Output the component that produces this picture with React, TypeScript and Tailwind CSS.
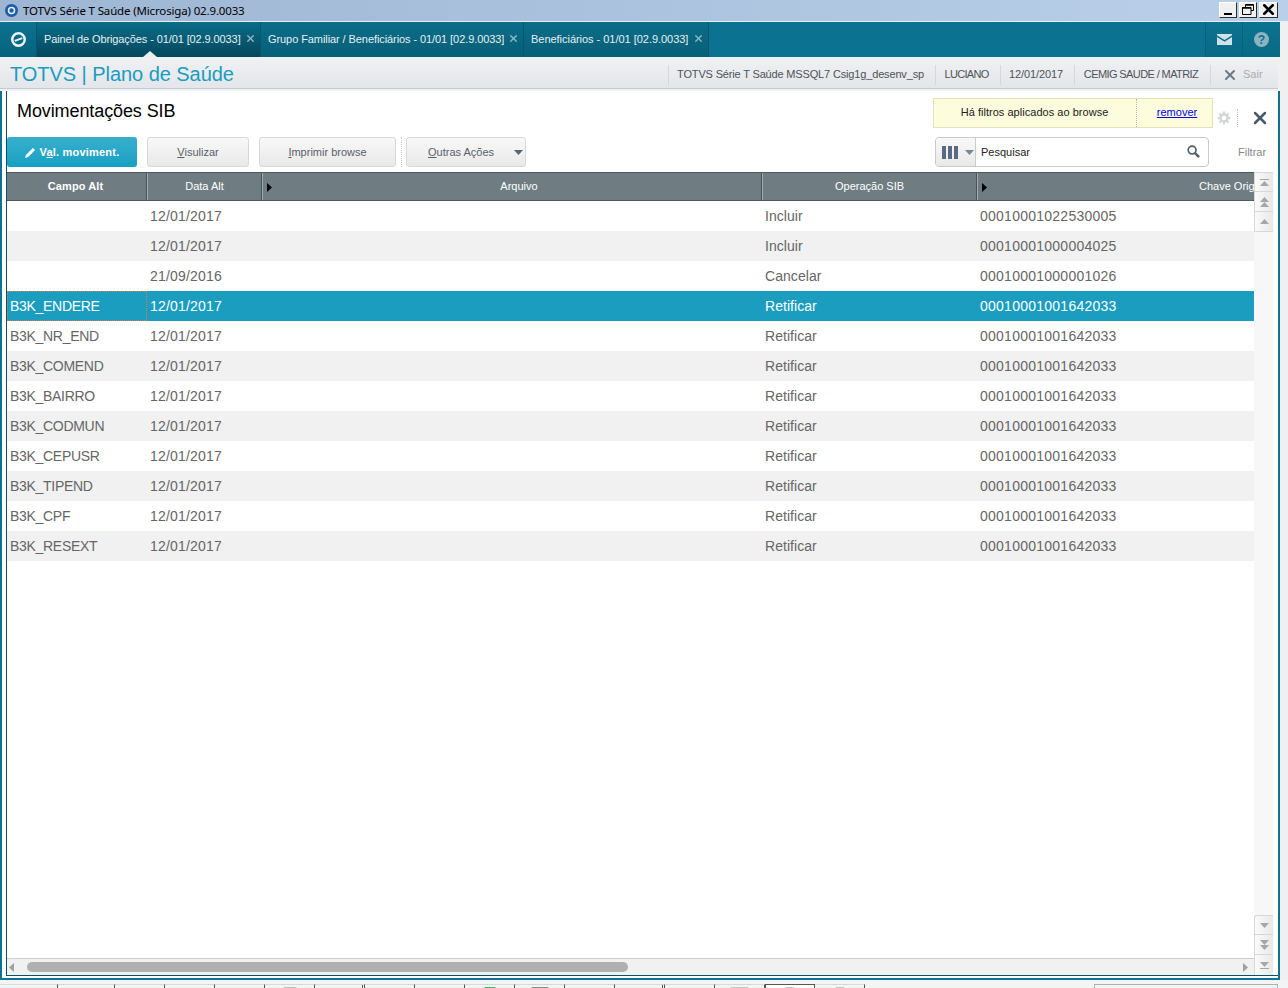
import { X } from 'lucide-react'

const font = "font-['Liberation_Sans',Arial,sans-serif]"

const rows = [
  { campo: '', data: '12/01/2017', op: 'Incluir', chave: '00010001022530005' },
  { campo: '', data: '12/01/2017', op: 'Incluir', chave: '00010001000004025' },
  { campo: '', data: '21/09/2016', op: 'Cancelar', chave: '00010001000001026' },
  { campo: 'B3K_ENDERE', data: '12/01/2017', op: 'Retificar', chave: '00010001001642033', selected: true },
  { campo: 'B3K_NR_END', data: '12/01/2017', op: 'Retificar', chave: '00010001001642033' },
  { campo: 'B3K_COMEND', data: '12/01/2017', op: 'Retificar', chave: '00010001001642033' },
  { campo: 'B3K_BAIRRO', data: '12/01/2017', op: 'Retificar', chave: '00010001001642033' },
  { campo: 'B3K_CODMUN', data: '12/01/2017', op: 'Retificar', chave: '00010001001642033' },
  { campo: 'B3K_CEPUSR', data: '12/01/2017', op: 'Retificar', chave: '00010001001642033' },
  { campo: 'B3K_TIPEND', data: '12/01/2017', op: 'Retificar', chave: '00010001001642033' },
  { campo: 'B3K_CPF', data: '12/01/2017', op: 'Retificar', chave: '00010001001642033' },
  { campo: 'B3K_RESEXT', data: '12/01/2017', op: 'Retificar', chave: '00010001001642033' },
]

const tabs = [
  { label: 'Painel de Obrigações - 01/01 [02.9.0033]', w: 'w-[224px]', track: 'tracking-[-0.1px]', active: true },
  { label: 'Grupo Familiar / Beneficiários - 01/01 [02.9.0033]', w: 'w-[263px]', track: 'tracking-[-0.08px]' },
  { label: 'Beneficiários - 01/01 [02.9.0033]', w: 'w-[185px]', track: 'tracking-[-0.03px]' },
]

const info = [
  { label: 'TOTVS Série T Saúde MSSQL7 Csig1g_desenv_sp', w: 'w-[267px]', track: 'tracking-[-0.16px]' },
  { label: 'LUCIANO', w: 'w-[65px]', track: 'tracking-[-0.7px]' },
  { label: '12/01/2017', w: 'w-[74px]', track: 'tracking-[-0.1px]' },
  { label: 'CEMIG SAUDE / MATRIZ', w: 'w-[136px]', track: 'tracking-[-0.6px]' },
]

// células da barra de janelas, quase toda cortada na parte de baixo da tela
const taskCells = [
  { w: 'w-[58px]' },
  { w: 'w-[57px]' },
  { w: 'w-[50px]' },
  { w: 'w-[50px]' },
  { w: 'w-[50px]' },
  { w: 'w-[50px]', mark: 'w-[14px] bg-[#bdbdbd]' },
  { w: 'w-[50px]', double: true },
  { w: 'w-[50px]' },
  { w: 'w-[50px]' },
  { w: 'w-[50px]', mark: 'w-[12px] bg-[#47b866]' },
  { w: 'w-[50px]', mark: 'w-[18px] bg-[#8a8a8a]' },
  { w: 'w-[50px]' },
  { w: 'w-[50px]', double: true },
  { w: 'w-[50px]' },
  { w: 'w-[50px]', mark: 'w-[19px] bg-[#c4c4c4]' },
  { w: 'w-[50px]', selected: true, mark: 'w-[10px] bg-[#c4c4c4]' },
  { w: 'w-[50px]', mark: 'w-[10px] bg-[#c4c4c4]' },
]

const Tri = ({ dir, className }: { dir: 'up' | 'down' | 'left' | 'right'; className?: string }) => {
  const pts = { up: '0,5 4.5,0 9,5', down: '0,0 9,0 4.5,5', left: '5,0 5,9 0,4.5', right: '0,0 0,9 5,4.5' }[dir]
  const box = dir === 'up' || dir === 'down' ? 'w-[9px] h-[5px]' : 'w-[5px] h-[9px]'
  const vb = dir === 'up' || dir === 'down' ? '0 0 9 5' : '0 0 5 9'
  return (
    <svg viewBox={vb} className={`${box} ${className ?? ''}`}>
      <polygon points={pts} fill="currentColor" />
    </svg>
  )
}

const ToolButton = ({ w, children }: { w: string; children: React.ReactNode }) => (
  <button className={`${w} h-[30px] rounded-[3px] border border-[#d6d8da] bg-gradient-to-b from-[#f8f8f8] to-[#e9e9e9] text-[11px] text-[#5a6068]`}>
    {children}
  </button>
)

const ScrollBtn = ({ children, className }: { children: React.ReactNode; className?: string }) => (
  <div className={`h-[20px] flex flex-col items-center justify-center bg-gradient-to-r from-[#fafafa] to-[#e8e8e8] border-b border-l border-[#d8d8d8] text-[#a6a6a6] ${className ?? ''}`}>
    {children}
  </div>
)

const WinBtn = ({ w, children }: { w: string; children: React.ReactNode }) => (
  <div className={`${w} h-[16px] flex items-center justify-center bg-[#f0f0f0] border border-[#2e2e2e] border-l-white border-t-white`}>
    {children}
  </div>
)

export default function App() {
  return (
    <div className={`${font} w-[1288px] h-[988px] overflow-hidden flex flex-col bg-[#f0f0f0]`}>
      {/* Barra de título */}
      <div className="h-[22px] shrink-0 flex items-center pl-[4px] pr-[10px] bg-gradient-to-r from-[#9db6d3] to-[#bad0ea] border-b border-[#e6eef7]">
        <svg viewBox="0 0 16 16" className="w-[15px] h-[15px]">
          <circle cx="8" cy="8" r="7.5" fill="#1c5fa8" stroke="#b8c0cc" />
          <circle cx="8" cy="8" r="3.2" fill="none" stroke="#e8f2fb" strokeWidth="1.6" />
        </svg>
        <span className="ml-[4px] text-[11.5px] tracking-[-0.15px] text-black font-['Noto_Sans',sans-serif]">TOTVS Série T Saúde (Microsiga) 02.9.0033</span>
        <div className="ml-auto -mt-[2px] flex gap-[2px]">
          <WinBtn w="w-[18px]"><div className="w-[8px] h-[2px] bg-black mt-[8px]" /></WinBtn>
          <WinBtn w="w-[18px]">
            <svg viewBox="0 0 12 11" className="w-[12px] h-[11px]" fill="none" stroke="#000">
              <path d="M3.5 3V.5h8v6H9M.5 3.5h8.5v7H.5z" />
              <path d="M.5 4h8.5M3.5 1h8" strokeWidth="1.4" />
            </svg>
          </WinBtn>
          <WinBtn w="w-[19px]"><X className="w-[17px] h-[17px] text-black" strokeWidth={3.6} /></WinBtn>
        </div>
      </div>

      {/* Navegação */}
      <div className="w-[1280px] h-[35px] shrink-0 flex bg-[#0b7391]">
        <div className="w-[37px] flex items-center justify-center bg-gradient-to-b from-[#0b7391] to-[#07627c] border-r border-[#07566d]">
          <svg viewBox="0 0 18 18" className="w-[17px] h-[17px]" fill="none" stroke="#eef5f7" strokeWidth="2.6">
            <circle cx="9" cy="9" r="6.6" />
            <path d="M5 10.5 13 7.5" strokeWidth="2" />
          </svg>
        </div>
        {tabs.map((t) => (
          <div key={t.label} className={`${t.w} relative flex items-center pl-[7px] text-[11px] text-[#e6f0f3] border-r border-[#07566d] bg-gradient-to-b from-[#0a6d88] ${t.active ? 'to-[#03485d]' : 'to-[#075f78]'}`}>
            <span className={`${t.track} whitespace-nowrap`}>{t.label}</span>
            <X className="absolute right-[4px] top-[11px] w-[11px] h-[11px] text-[#8fb8c6]" strokeWidth={3} />
            {t.active && <div className="absolute bottom-0 left-[106px] w-0 h-0 border-x-[7px] border-x-transparent border-b-[6px] border-b-[#eceff1]" />}
          </div>
        ))}
        <div className="ml-auto flex h-full">
          <div className="w-[37px] flex items-center justify-center bg-gradient-to-b from-[#0b7391] to-[#086a85] border-l border-[#086079]">
            <svg viewBox="0 0 15 11" className="w-[15px] h-[11px]">
              <path d="M0 1.2 7.5 6 15 1.2V0H0zM0 2.9V11h15V2.9L7.5 7.7z" fill="#cfe2e9" />
            </svg>
          </div>
          <div className="w-[38px] flex items-center justify-center bg-gradient-to-b from-[#0b7391] to-[#086a85] border-l border-[#086079]">
            <div className="w-[15px] h-[15px] rounded-full bg-[#8fb2bf] text-[#0b7391] text-[12px] font-bold flex items-center justify-center">?</div>
          </div>
        </div>
      </div>

      {/* Faixa do produto */}
      <div className="w-[1278px] h-[32px] shrink-0 flex items-center pl-[10px] bg-gradient-to-b from-[#f0f1f3] to-[#e3e6ea] border-b border-[#c6cbce]">
        <span className="pt-[3px] text-[20px] tracking-[-0.05px] text-[#1a9cc0] whitespace-nowrap">TOTVS | Plano de Saúde</span>
        <div className="ml-auto mt-[4px] flex h-[20px] items-center text-[11px] text-[#4e5358]">
          {info.map((i) => (
            <div key={i.label} className={`${i.w} ${i.track} h-full flex items-center justify-center pr-[3px] border-l border-[#d6d9dc] whitespace-nowrap`}>{i.label}</div>
          ))}
          <div className="w-[68px] h-full flex items-center pl-[11px] border-l border-[#d6d9dc] text-[#a8adb1]">
            <X className="w-[16px] h-[16px] text-[#6d7a85] mr-[5px]" strokeWidth={3} />
            Sair
          </div>
        </div>
      </div>
      <div className="w-[1278px] h-[2px] shrink-0 bg-[#f0f1f2]" />

      {/* Moldura do conteúdo */}
      <div className="w-[1280px] flex-1 min-h-0 flex flex-col border-x-2 border-b-2 border-[#0b7391] pb-[2px] pl-[4px] bg-white">
        <div className="flex-1 min-h-0 flex flex-col border-l border-b border-[#0b4f68]">
          <div className="h-[46px] shrink-0 flex pt-[7px]">
            <h1 className="pl-[10px] text-[18px] leading-[26px] tracking-[-0.1px] text-black">Movimentações SIB</h1>
            <div className="ml-auto flex h-[30px] text-[11px] border border-[#e3e3b8] bg-[#fdfcdd] text-[#222]">
              <div className="w-[203px] flex items-center justify-center pb-[1px] pr-[1px] tracking-[0.03px] border-r border-dotted border-[#aeb4b8]">Há filtros aplicados ao browse</div>
              <div className="w-[75px] flex items-center justify-center pl-[5px] pb-[1px] text-[#0000ee] underline">remover</div>
            </div>
            <div className="w-[65px] flex items-center">
              <svg viewBox="0 0 24 24" className="w-[14px] h-[14px] ml-[4px]" fill="none" stroke="#d4d6d8" strokeWidth="4">
                <circle cx="12" cy="12" r="6" />
                <path d="M12 1v5M12 18v5M1 12h5M18 12h5M4.2 4.2l3.6 3.6M16.2 16.2l3.6 3.6M4.2 19.8l3.6-3.6M16.2 7.8l3.6-3.6" />
              </svg>
              <div className="w-px h-[18px] ml-[6px] border-l border-dotted border-[#c0c4c8]" />
              <X className="w-[20px] h-[20px] ml-[12px] text-[#4a5a6c]" strokeWidth={3} />
            </div>
          </div>

          {/* Barra de ações */}
          <div className="h-[35px] shrink-0 flex items-start">
            <button className="w-[130px] h-[30px] rounded-[3px] bg-gradient-to-b from-[#38aecd] to-[#14a0c2] text-[11px] tracking-[0.2px] font-bold text-white flex items-center justify-center">
              <svg viewBox="0 0 12 12" className="w-[11px] h-[11px] mr-[4px]" fill="#fff">
                <path d="M0 12l1-3.4L8.6 1l2.4 2.4L3.4 11z" />
              </svg>
              <span>V<u>a</u>l. moviment.</span>
            </button>
            <div className="ml-[10px]"><ToolButton w="w-[102px]"><u>V</u>isulizar</ToolButton></div>
            <div className="ml-[10px]"><ToolButton w="w-[137px]"><u>I</u>mprimir browse</ToolButton></div>
            <div className="ml-[5px] h-[30px] border-l border-dotted border-[#c4c8cc]" />
            <div className="ml-[4px]">
              <button className="w-[120px] h-[30px] rounded-[3px] border border-[#d6d8da] bg-gradient-to-b from-[#f8f8f8] to-[#e9e9e9] text-[11px] text-[#5a6068] flex items-center pl-[21px]">
                <span><u>O</u>utras Ações</span>
                <Tri dir="down" className="ml-auto mr-[2px] text-[#5c6470]" />
              </button>
            </div>
            <div className="ml-[409px] w-[274px] h-[30px] flex rounded-[4px] border border-[#c9cccf] bg-white">
              <div className="w-[40px] flex items-center pl-[6px] border-r border-[#c9cccf] rounded-l-[4px] bg-gradient-to-b from-[#f8f8f8] to-[#e9e9e9]">
                <div className="w-[4px] h-[13px] bg-[#5c6a80]" />
                <div className="w-[4px] h-[13px] bg-[#5c6a80] ml-[2px]" />
                <div className="w-[4px] h-[13px] bg-[#5c6a80] ml-[2px]" />
                <Tri dir="down" className="ml-[7px] text-[#7c8694]" />
              </div>
              <span className="pl-[5px] text-[11px] leading-[28px] text-[#222]">Pesquisar</span>
              <svg viewBox="0 0 14 14" className="ml-auto mr-[8px] mt-[7px] w-[13px] h-[13px]" fill="none" stroke="#4f5d6c">
                <circle cx="5.5" cy="5.5" r="4.2" strokeWidth="1.8" />
                <path d="M8.6 8.6 13 13" strokeWidth="2.6" />
              </svg>
            </div>
            <span className="ml-[29px] text-[11px] leading-[30px] text-[#888]">Filtrar</span>
          </div>

          {/* Grade */}
          <div className="flex-1 min-h-0 flex">
            <div className="w-[1247px] flex flex-col min-h-0">
              <div className="flex-1 min-h-0 overflow-hidden">
                <div className="h-[29px] flex border-y border-[#4f5a60] bg-[#6f7d82] text-[11px] text-white">
                  <div className="w-[140px] flex items-center justify-center border-r border-[#4a5358] font-bold pr-[2px] tracking-[0.1px]">Campo Alt</div>
                  <div className="w-[115px] flex items-center justify-center border-l border-r border-l-[#a4aeb2] border-r-[#4a5358]">Data Alt</div>
                  <div className="w-[500px] relative flex items-center justify-center pl-[14px] border-l border-r border-l-[#a4aeb2] border-r-[#4a5358]">
                    <Tri dir="right" className="absolute left-[4px] top-[10px] text-black" />
                    Arquivo
                  </div>
                  <div className="w-[215px] flex items-center justify-center border-l border-r border-l-[#a4aeb2] border-r-[#4a5358]">Operação SIB</div>
                  <div className="relative flex-1 overflow-hidden whitespace-nowrap flex items-center border-l border-l-[#a4aeb2]">
                    <Tri dir="right" className="absolute left-[4px] top-[10px] text-black" />
                    <span className="ml-[221px]">Chave Orig</span>
                  </div>
                </div>
                {rows.map((r, i) => (
                  <div key={i} className={`h-[30px] flex items-center text-[14px] ${r.selected ? 'bg-[#1b9dbf] text-white' : i % 2 ? 'bg-[#f1f1f1] text-[#666]' : 'bg-white text-[#666]'}`}>
                    <div className={`w-[140px] h-full flex items-center tracking-[-0.3px] ${r.selected ? 'pl-[2px] border border-dotted border-[#e07b4a]' : 'pl-[3px]'}`}>{r.campo}</div>
                    <div className="w-[115px] pl-[3px] tracking-[0.2px]">{r.data}</div>
                    <div className="w-[500px]" />
                    <div className="w-[215px] pl-[3px] tracking-[0.05px]">{r.op}</div>
                    <div className="pl-[3px] tracking-[0.25px]">{r.chave}</div>
                  </div>
                ))}
              </div>
              {/* Rolagem horizontal */}
              <div className="h-[17px] shrink-0 flex items-center border-t border-[#cfcfcf] bg-[#f1f1f1]">
                <Tri dir="left" className="ml-[2px] text-[#a0a0a0]" />
                <div className="ml-[13px] w-[601px] h-[10px] rounded-[5px] bg-[#b0b0b0]" />
                <Tri dir="right" className="ml-auto mr-[6px] text-[#a0a0a0]" />
              </div>
            </div>

            {/* Rolagem vertical */}
            <div className="w-[19px] flex flex-col justify-between bg-[#f7f7f7]">
              <div>
                <ScrollBtn className="border-t"><div className="w-[9px] h-px bg-[#a6a6a6] mb-px" /><Tri dir="up" /></ScrollBtn>
                <ScrollBtn><Tri dir="up" /><Tri dir="up" /></ScrollBtn>
                <ScrollBtn><Tri dir="up" /></ScrollBtn>
              </div>
              <div>
                <ScrollBtn className="rounded-tl-[3px] border-t"><Tri dir="down" /></ScrollBtn>
                <ScrollBtn><Tri dir="down" /><Tri dir="down" /></ScrollBtn>
                <ScrollBtn className="border-b-0"><Tri dir="down" /><div className="w-[9px] h-px bg-[#a6a6a6] mt-px" /></ScrollBtn>
              </div>
            </div>
          </div>
        </div>
      </div>

      {/* Barra inferior */}
      <div className="h-[8px] shrink-0 bg-[#f2f4f6] flex pt-[4px]">
        {taskCells.map((c, i) => (
          <div key={i} className={`${c.w} h-full flex justify-center border-r border-[#555] border-t ${c.selected ? 'border-t-[#555] border-l border-l-[#555] bg-white' : 'border-t-[#d8d8d8]'}`}>
            {c.mark && <div className={`${c.mark} h-[2px] mt-[2px] rounded-t-[3px]`} />}
            {c.double && <div className="ml-auto mr-[1px] w-px h-full bg-[#555]" />}
          </div>
        ))}
        <div className="ml-[229px] w-[184px] h-full border border-b-0 border-[#b0b0b0]" />
      </div>
    </div>
  )
}
